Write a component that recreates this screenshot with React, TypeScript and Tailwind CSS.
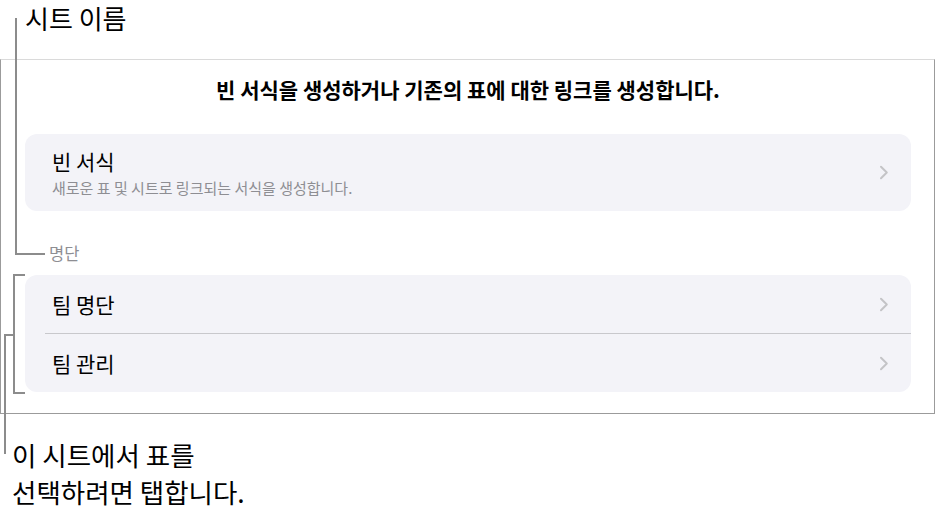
import React from "react";

function Chevron() {
  return (
    <svg width="10" height="15" viewBox="0 0 10 15" fill="none">
      <path
        d="M2 1.8 L7.8 7.5 L2 13.2"
        stroke="#c4c4c7"
        strokeWidth="2"
        strokeLinecap="round"
        strokeLinejoin="round"
      />
    </svg>
  );
}

function Row({ label }: { label: string }) {
  return (
    <div className="h-[58px] flex items-center justify-between pl-[27px] pr-[22px]">
      <span className="text-[21px] leading-[28px] text-black">{label}</span>
      <Chevron />
    </div>
  );
}

export default function App() {
  return (
    <div className="relative w-[935px] h-[513px] bg-white overflow-hidden font-['Noto_Sans_CJK_KR',sans-serif] text-black">
      {/* top callout label */}
      <div className="h-[59px] pl-[25px] text-[26px] leading-[36px]">시트 이름</div>

      {/* panel */}
      <div className="h-[355px] border-t border-t-[#dadada] border-x border-b border-x-[#9b9b9b] border-b-[#9b9b9b] pl-[24px] pr-[23px]">
        <h2 className="pt-[15px] text-center text-[21px] leading-[28px] font-semibold">
          빈 서식을 생성하거나 기존의 표에 대한 링크를 생성합니다.
        </h2>

        <div className="mt-[31px] h-[77px] rounded-[12px] bg-[#f3f3f8] flex items-center justify-between pl-[27px] pr-[22px]">
          <div className="flex flex-col gap-[3px]">
            <span className="text-[21px] leading-[28px]">빈 서식</span>
            <span className="text-[15px] leading-[20px] text-[#8e8e93]">
              새로운 표 및 시트로 링크되는 서식을 생성합니다.
            </span>
          </div>
          <Chevron />
        </div>

        <div className="mt-[31px] pl-[24px] text-[16.5px] leading-[22px] text-[#8e8e93]">명단</div>

        <div className="mt-[11px] rounded-[12px] bg-[#f3f3f8] overflow-hidden">
          <Row label="팀 명단" />
          <div className="ml-[20px] h-px bg-[#c8c8cc]" />
          <Row label="팀 관리" />
        </div>
      </div>

      {/* bottom callout label */}
      <div className="pt-[22px] pl-[12px] text-[26.5px] leading-[37px]">
        이 시트에서 표를
        <br />
        선택하려면 탭합니다.
      </div>

      {/* callout lines */}
      <div className="absolute left-[15px] top-[18px] w-[2px] h-[237px] bg-[#8c8c8c]" />
      <div className="absolute left-[15px] top-[253px] w-[30px] h-[2px] bg-[#8c8c8c]" />

      <div className="absolute left-[13px] top-[274px] w-[2px] h-[120px] bg-[#8c8c8c]" />
      <div className="absolute left-[13px] top-[274px] w-[12px] h-[2px] bg-[#8c8c8c]" />
      <div className="absolute left-[13px] top-[392px] w-[12px] h-[2px] bg-[#8c8c8c]" />
      <div className="absolute left-[4px] top-[334px] w-[10px] h-[2px] bg-[#8c8c8c]" />
      <div className="absolute left-[4px] top-[334px] w-[2px] h-[120px] bg-[#8c8c8c]" />
    </div>
  );
}
